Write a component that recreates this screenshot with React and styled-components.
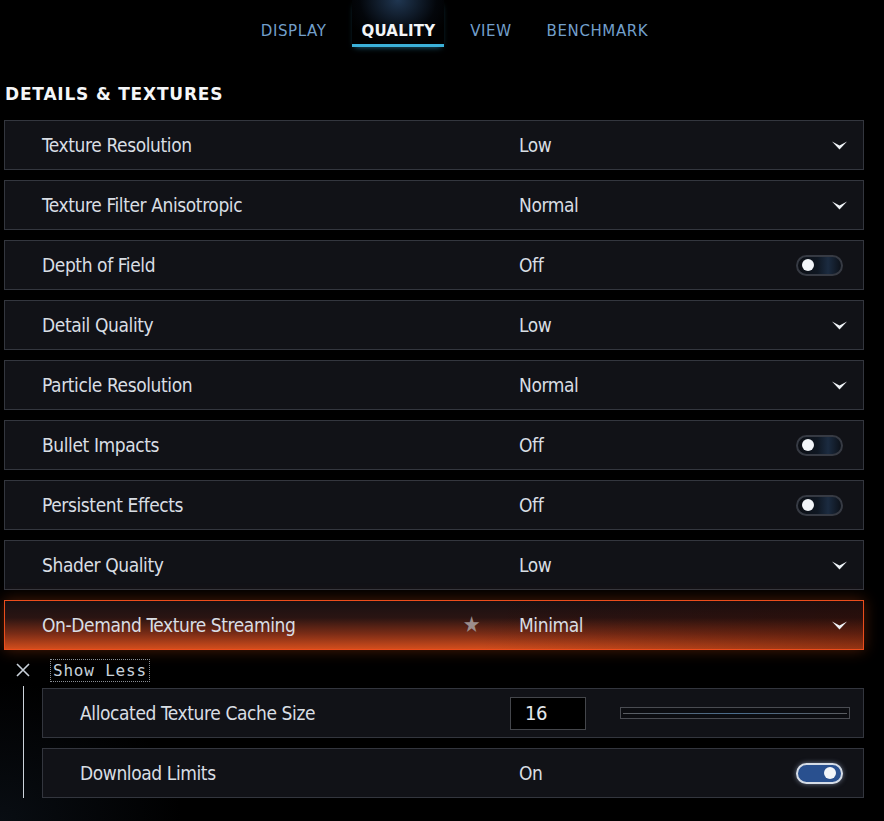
import React from 'react';
import styled, { createGlobalStyle } from 'styled-components';

const GlobalStyle = createGlobalStyle`
  html, body {
    margin: 0;
    padding: 0;
    background: #000;
  }
  body {
    width: 884px;
    min-height: 821px;
    overflow: hidden;
    background:
      radial-gradient(ellipse 260px 200px at 0% 100%, rgba(40, 60, 85, 0.22), rgba(0, 0, 0, 0) 70%),
      #000;
  }
`;

const Page = styled.div`
  display: flex;
  flex-direction: column;
  width: 884px;
  min-height: 821px;
`;

const TabBar = styled.nav`
  display: flex;
  justify-content: center;
  gap: 17px;
  height: 47px;
  padding-left: 25px;
`;

const Tab = styled.div`
  position: relative;
  display: flex;
  align-items: center;
  padding: 18px 9px 0;
  height: 26px;
  font-family: "DejaVu Sans", sans-serif;
  font-size: 15px;
  letter-spacing: ${(p) => (p.$active ? '0.2px' : '0.6px')};
  color: ${(p) => (p.$active ? '#f2f5f8' : '#729fcb')};
  font-weight: ${(p) => (p.$active ? 'bold' : 'normal')};
  border-bottom: 3px solid ${(p) => (p.$active ? '#3bb0d8' : 'transparent')};
  background: ${(p) =>
    p.$active
      ? 'radial-gradient(ellipse 55px 48px at 50% 0%, rgba(70, 120, 180, 0.45), rgba(20, 40, 70, 0.15) 70%, rgba(0,0,0,0) 100%)'
      : 'none'};
  box-shadow: ${(p) => (p.$active ? '0 3px 6px -3px rgba(60, 180, 230, 0.6)' : 'none')};
`;

const Heading = styled.h2`
  margin: 35px 0 14px 5px;
  height: 24px;
  line-height: 24px;
  font-family: "DejaVu Sans", sans-serif;
  font-size: 17px;
  font-weight: bold;
  letter-spacing: 0.8px;
  color: #f4f6f8;
`;

const List = styled.div`
  display: flex;
  flex-direction: column;
  gap: 10px;
  margin-left: ${(p) => p.$indent ?? 4}px;
  width: ${(p) => p.$width ?? 860}px;
`;

const Row = styled.div`
  display: flex;
  align-items: center;
  box-sizing: border-box;
  height: 50px;
  padding-left: 37px;
  border: 1px solid ${(p) => (p.$hot ? '#ec4d1c' : '#33363e')};
  background: ${(p) =>
    p.$hot
      ? `linear-gradient(90deg, rgba(0,0,0,0) 0%, rgba(0,0,0,0) 55%, rgba(40,6,0,0.35) 100%),
         linear-gradient(180deg, #181012 0%, #2a1412 35%, #7a2c16 68%, #d24d1c 100%)`
      : '#111217'};
  box-shadow: ${(p) => (p.$hot ? '0 0 14px rgba(220, 80, 20, 0.35)' : 'none')};
  font-family: "DejaVu Sans Condensed", "DejaVu Sans", sans-serif;
  font-stretch: condensed;
  font-size: 19px;
  letter-spacing: -0.4px;
  color: #d9dee4;
`;

const Label = styled.div`
  display: flex;
  align-items: center;
  justify-content: space-between;
  flex: 0 0 ${(p) => p.$width}px;
  padding-right: 39px;
  box-sizing: border-box;
`;

const Star = styled.span`
  font-size: 22px;
  color: #9c8e8c;
  line-height: 1;
`;

const Value = styled.div`
  flex: 1;
`;

const Control = styled.div`
  display: flex;
  align-items: center;
  margin-right: ${(p) => p.$right}px;
`;

const Toggle = styled.div`
  position: relative;
  box-sizing: border-box;
  width: 47px;
  height: 21px;
  border-radius: 11px;
  border: 2px solid ${(p) => (p.$on ? '#d5dce6' : '#363a43')};
  background: ${(p) =>
    p.$on
      ? '#29508f'
      : 'linear-gradient(90deg, #0c0f15 0%, #0f1722 45%, #1b2b40 70%, #0c1119 100%)'};
  box-shadow: ${(p) => (p.$on ? '0 0 5px rgba(200, 220, 255, 0.5)' : 'none')};

  &::after {
    content: '';
    position: absolute;
    top: 2.5px;
    ${(p) => (p.$on ? 'right: 5px;' : 'left: 4px;')}
    width: 12px;
    height: 12px;
    border-radius: 50%;
    background: #f2f5f9;
  }
`;

const ShowLessBar = styled.div`
  display: flex;
  align-items: center;
  height: 36px;
  margin-top: 2px;
  padding-left: 16px;
  gap: 22px;
`;

const CloseIcon = styled.svg`
  width: 14px;
  height: 14px;
`;

const ShowLessText = styled.span`
  font-family: "DejaVu Sans Mono", monospace;
  font-size: 16px;
  color: #c8d2dc;
  outline: 1px dotted #8a8f96;
  outline-offset: 1px;
  padding: 0 1px;
  letter-spacing: 0.8px;
`;

const SubSection = styled.div`
  display: flex;
  padding-bottom: 10px;
`;

const Rail = styled.div`
  flex: 0 0 42px;
  display: flex;
  justify-content: flex-start;
  padding-left: 23px;
  box-sizing: border-box;
  margin-top: -2px;

  &::before {
    content: '';
    width: 1px;
    background: #cdd4dc;
  }
`;

const NumberBox = styled.div`
  box-sizing: border-box;
  width: 76px;
  height: 33px;
  margin-left: -9px;
  padding-left: 14px;
  line-height: 31px;
  border: 1px solid #44464b;
  background: #000;
  font-size: 20px;
  color: #e4e8ec;
`;

const Slider = styled.div`
  display: flex;
  align-items: center;
  box-sizing: border-box;
  width: 230px;
  height: 12px;
  margin-left: 34px;
  padding: 0 2px;
  border: 1px solid #4a4c52;
  background: #0c0d11;

  &::before {
    content: '';
    flex: 1;
    height: 1px;
    background: linear-gradient(90deg, #5a5c60 0%, #4a6d8e 50%, #5a5c60 100%);
  }
`;

const Chevron = () => (
  <svg width="15" height="9" viewBox="0 0 15 9">
    <polygon points="0,0.5 7.5,4.5 15,0.5 7.5,8.5" fill="#eef2f6" />
  </svg>
);

const rows = [
  { label: 'Texture Resolution', value: 'Low', kind: 'select' },
  { label: 'Texture Filter Anisotropic', value: 'Normal', kind: 'select' },
  { label: 'Depth of Field', value: 'Off', kind: 'toggle' },
  { label: 'Detail Quality', value: 'Low', kind: 'select' },
  { label: 'Particle Resolution', value: 'Normal', kind: 'select' },
  { label: 'Bullet Impacts', value: 'Off', kind: 'toggle' },
  { label: 'Persistent Effects', value: 'Off', kind: 'toggle' },
  { label: 'Shader Quality', value: 'Low', kind: 'select' },
  { label: 'On-Demand Texture Streaming', value: 'Minimal', kind: 'select', hot: true, star: true },
];

const renderControl = (kind, on) => {
  if (kind === 'select') {
    return (
      <Control $right={16}>
        <Chevron />
      </Control>
    );
  }
  return (
    <Control $right={20}>
      <Toggle $on={on} />
    </Control>
  );
};

export default function App() {
  return (
    <Page>
      <GlobalStyle />
      <TabBar>
        <Tab>DISPLAY</Tab>
        <Tab $active>QUALITY</Tab>
        <Tab>VIEW</Tab>
        <Tab>BENCHMARK</Tab>
      </TabBar>

      <Heading>DETAILS &amp; TEXTURES</Heading>

      <List>
        {rows.map((r) => (
          <Row key={r.label} $hot={r.hot}>
            <Label $width={477}>
              <span>{r.label}</span>
              {r.star && <Star>★</Star>}
            </Label>
            <Value>{r.value}</Value>
            {renderControl(r.kind, false)}
          </Row>
        ))}
      </List>

      <ShowLessBar>
        <CloseIcon viewBox="0 0 14 14">
          <path d="M1 1 L13 13 M13 1 L1 13" stroke="#c9d1da" strokeWidth="1.6" />
        </CloseIcon>
        <ShowLessText>Show Less</ShowLessText>
      </ShowLessBar>

      <SubSection>
        <Rail />
        <List $indent={0} $width={822}>
          <Row>
            <Label $width={439}>
              <span>Allocated Texture Cache Size</span>
            </Label>
            <NumberBox>16</NumberBox>
            <Slider />
          </Row>
          <Row>
            <Label $width={439}>
              <span>Download Limits</span>
            </Label>
            <Value>On</Value>
            {renderControl('toggle', true)}
          </Row>
        </List>
      </SubSection>
    </Page>
  );
}
